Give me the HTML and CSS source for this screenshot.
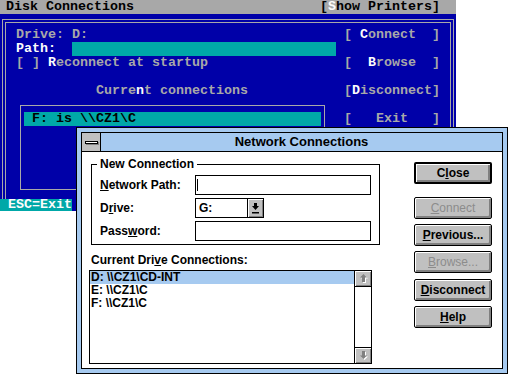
FILE: index.html
```html
<!DOCTYPE html>
<html lang="en">
<head>
    <meta charset="UTF-8">
    <meta name="viewport" content="width=device-width, initial-scale=1.0">
    <link rel="stylesheet" href="styles.css">
    <title>Disk Connections</title>
</head>
<body>
    <div class="screen">
        <div class="dos">
            <div class="dos-title">
                <span class="txt">Disk Connections</span>
                <span class="txt">[<span class="hot">S</span>how Printers]</span>
            </div>
            <div class="dos-frame">
                <div class="dos-inner">
                    <div class="dos-left">
                        <div class="line">Drive: D:</div>
                        <div class="line"><span class="hot">Path:</span>  <span class="path-field"></span></div>
                        <div class="line">[ ] <span class="hot">R</span>econnect at startup</div>
                        <div class="line"></div>
                        <div class="line">          Curre<span class="hot">n</span>t connections</div>
                        <div class="conn-box">
                            <div class="conn-item">F: is \\CZ1\C</div>
                        </div>
                    </div>
                    <div class="dos-buttons">
                        <div class="line">[ <span class="hot">C</span>onnect  ]</div>
                        <div class="line"></div>
                        <div class="line">[  <span class="hot">B</span>rowse  ]</div>
                        <div class="line"></div>
                        <div class="line">[<span class="hot">D</span>isconnect]</div>
                        <div class="line"></div>
                        <div class="line">[   Exit   ]</div>
                    </div>
                </div>
            </div>
            <div class="dos-status"><span class="status-key">ESC=Exit</span></div>
        </div>

        <div class="dialog">
            <div class="dialog-inner">
                <div class="dialog-title">
                    <div class="sysmenu"><span class="sysmenu-bar"></span></div>
                    <div class="title-text">Network Connections</div>
                </div>
                <div class="dialog-body">
                    <div class="dialog-main">
                        <fieldset class="group">
                            <legend>New Connection</legend>
                            <div class="form-grid">
                                <span class="label"><u>N</u>etwork Path:</span>
                                <div class="field"><span class="caret"></span></div>
                                <span class="label">D<u>r</u>ive:</span>
                                <div class="combo">
                                    <span class="combo-value">G:</span>
                                    <span class="combo-btn">
                                        <svg width="9" height="11" viewBox="0 0 9 11">
                                            <polygon points="3,0 6,0 6,3 8,3 4.5,7 1,3 3,3" fill="#000"/>
                                            <rect x="1" y="9" width="7" height="1.5" fill="#000"/>
                                        </svg>
                                    </span>
                                </div>
                                <span class="label">Pass<u>w</u>ord:</span>
                                <div class="field"></div>
                            </div>
                        </fieldset>
                        <div class="list-label">Current Dri<u>v</u>e Connections:</div>
                        <div class="listbox">
                            <div class="list-items">
                                <div class="list-item selected">D: \\CZ1\CD-INT</div>
                                <div class="list-item">E: \\CZ1\C</div>
                                <div class="list-item">F: \\CZ1\C</div>
                            </div>
                            <div class="scrollbar">
                                <span class="scroll-btn up">
                                    <svg width="9" height="9" viewBox="0 0 9 9">
                                        <polygon points="5.5,1 9,4.5 7,4.5 7,9 4,9 4,4.5 2,4.5" fill="#fff"/>
                                        <polygon points="4.5,0 8,3.5 6,3.5 6,8 3,8 3,3.5 1,3.5" fill="#808080"/>
                                    </svg>
                                </span>
                                <span class="scroll-track"></span>
                                <span class="scroll-btn down">
                                    <svg width="9" height="9" viewBox="0 0 9 9">
                                        <polygon points="5.5,9 9,5.5 7,5.5 7,1 4,1 4,5.5 2,5.5" fill="#fff"/>
                                        <polygon points="4.5,8 8,4.5 6,4.5 6,0 3,0 3,4.5 1,4.5" fill="#808080"/>
                                    </svg>
                                </span>
                            </div>
                        </div>
                    </div>
                    <div class="dialog-buttons">
                        <button class="btn default">C<u>l</u>ose</button>
                        <button class="btn disabled"><u>C</u>onnect</button>
                        <button class="btn"><u>P</u>revious...</button>
                        <button class="btn disabled"><u>B</u>rowse...</button>
                        <button class="btn gap"><u>D</u>isconnect</button>
                        <button class="btn"><u>H</u>elp</button>
                    </div>
                </div>
            </div>
        </div>
    </div>
</body>
</html>
```

FILE: styles.css
```css
body{margin:0;background:#fff;}
.screen{
    position: relative;
    width: 509px;
    height: 375px;
    overflow: hidden;
}

/* dos text screen */
.dos{
    width: 456px;
    background: #0000a8;
    color: #a8a8a8;
    font-family: "Liberation Mono", "DejaVu Sans Mono", monospace;
    font-size: 13.33px;
    font-weight: bold;
    line-height: 14px;
}
.dos-title{
    height: 14px;
    background: #a8a8a8;
    color: #000;
    display: flex;
    justify-content: space-between;
    padding: 0 16px 0 6px;
}
.txt{white-space: pre;}
.hot{color: #fcfcfc;}
.dos-frame{
    margin: 5px 2px 0;
    border: 1px solid #a8a8a8;
    border-bottom: 0;
    padding: 2px 2px 0;
}
.dos-inner{
    height: 177px;
    box-sizing: border-box;
    border: 1px solid #a8a8a8;
    border-bottom: 0;
    padding: 5px 0 0 10px;
    display: flex;
}
.dos-left{width: 320px;}
.dos-buttons{margin-left: 8px;}
.line{
    height: 14px;
    white-space: pre;
}
.path-field{
    display: inline-block;
    width: 264px;
    height: 14px;
    background: #00a8a8;
    vertical-align: top;
}
.conn-box{
    margin: 7px 0 0 4px;
    width: 305px;
    height: 85px;
    box-sizing: border-box;
    border: 1px solid #a8a8a8;
    padding: 6px 3px 0;
}
.conn-item{
    height: 14px;
    background: #00a8a8;
    color: #000;
    padding-left: 8px;
    white-space: pre;
}
.dos-status{height: 12px;line-height: 12px;}
.status-key{
    display: inline-block;
    width: 64px;
    padding-left: 8px;
    background: #00a8a8;
    color: #fcfcfc;
    font-family: "Liberation Mono", monospace;
}

/* windows dialog */
.dialog{
    position: absolute;
    left: 76px;
    top: 127px;
    width: 432px;
    height: 247px;
    box-sizing: border-box;
    border: 1px solid #000;
    background: #a6caf0;
    padding: 4px;
    display: flex;
    font-family: "Liberation Sans", Arial, sans-serif;
    font-size: 12px;
    font-weight: bold;
    color: #000;
}
.dialog-inner{
    flex: 1;
    border: 1px solid #000;
    background: #fff;
    display: flex;
    flex-direction: column;
}
.dialog-title{
    height: 18px;
    border-bottom: 1px solid #000;
    background: #a6caf0;
    display: flex;
}
.sysmenu{
    width: 18px;
    background: #c0c0c0;
    border-right: 1px solid #000;
    display: flex;
    align-items: center;
    justify-content: center;
}
.sysmenu-bar{
    width: 11px;
    height: 1px;
    border: 1px solid #000;
    background: #fff;
    box-shadow: 1px 1px 0 #808080;
}
.title-text{
    flex: 1;
    text-align: center;
    font-size: 13px;
    line-height: 18px;
}
.dialog-body{
    flex: 1;
    display: flex;
    padding: 5px 10px 0 7px;
}
.dialog-main{width: 292px;}
.group{
    margin: 0 0 0 2px;
    width: 289px;
    box-sizing: border-box;
    border: 1px solid #000;
    padding: 3px 8px 3px 8px;
    min-width: 0;
}
.group legend{
    padding: 0 3px;
    margin-left: -3px;
    line-height: 15px;
}
.form-grid{
    display: grid;
    grid-template-columns: 95px 176px;
    row-gap: 3px;
    align-items: center;
}
.label{line-height: 20px;}
.field{
    height: 20px;
    box-sizing: border-box;
    border: 1px solid #000;
    padding: 3px 0 0 1px;
}
.caret{
    display: block;
    width: 1px;
    height: 12px;
    background: #000;
}
.combo{
    width: 69px;
    height: 20px;
    box-sizing: border-box;
    border: 1px solid #000;
    display: flex;
}
.combo-value{
    flex: 1;
    padding-left: 3px;
    line-height: 18px;
}
.combo-btn{
    width: 15px;
    border-left: 1px solid #000;
    background: #c0c0c0;
    box-shadow: inset 1px 1px 0 #fff, inset -1px -1px 0 #808080;
    display: flex;
    align-items: center;
    justify-content: center;
}
.list-label{
    margin: 8px 0 2px 2px;
    line-height: 15px;
}
.listbox{
    width: 283px;
    height: 94px;
    box-sizing: border-box;
    border: 1px solid #000;
    display: flex;
}
.list-items{flex: 1;}
.list-item{
    height: 13px;
    line-height: 13px;
    padding-left: 1px;
}
.list-item.selected{background: #a6caf0;}
.scrollbar{
    width: 16px;
    border-left: 1px solid #000;
    display: flex;
    flex-direction: column;
}
.scroll-btn{
    height: 15px;
    background: #c0c0c0;
    box-shadow: inset 1px 1px 0 #fff, inset -1px -1px 0 #808080;
    display: flex;
    align-items: center;
    justify-content: center;
}
.scroll-btn.up{border-bottom: 1px solid #000;}
.scroll-btn.down{border-top: 1px solid #000;}
.scroll-track{flex: 1;background: #fff;}

.dialog-buttons{
    margin: 5px 0 0 auto;
    width: 78px;
    display: flex;
    flex-direction: column;
}
.btn{
    width: 78px;
    height: 22px;
    box-sizing: border-box;
    border: 1px solid #000;
    border-radius: 2px;
    background: #c0c0c0;
    box-shadow: inset 1px 1px 0 #fff, inset -2px -2px 0 #808080;
    font-family: "Liberation Sans", Arial, sans-serif;
    font-size: 12px;
    font-weight: bold;
    color: #000;
    padding: 0;
    margin: 0 0 5px;
    text-align: center;
}
.btn.default{
    border-width: 2px;
    margin-bottom: 13px;
}
.btn.disabled{color: #8c8c8c;font-weight: normal;}
.btn.gap{margin-top: 1px;}
```
